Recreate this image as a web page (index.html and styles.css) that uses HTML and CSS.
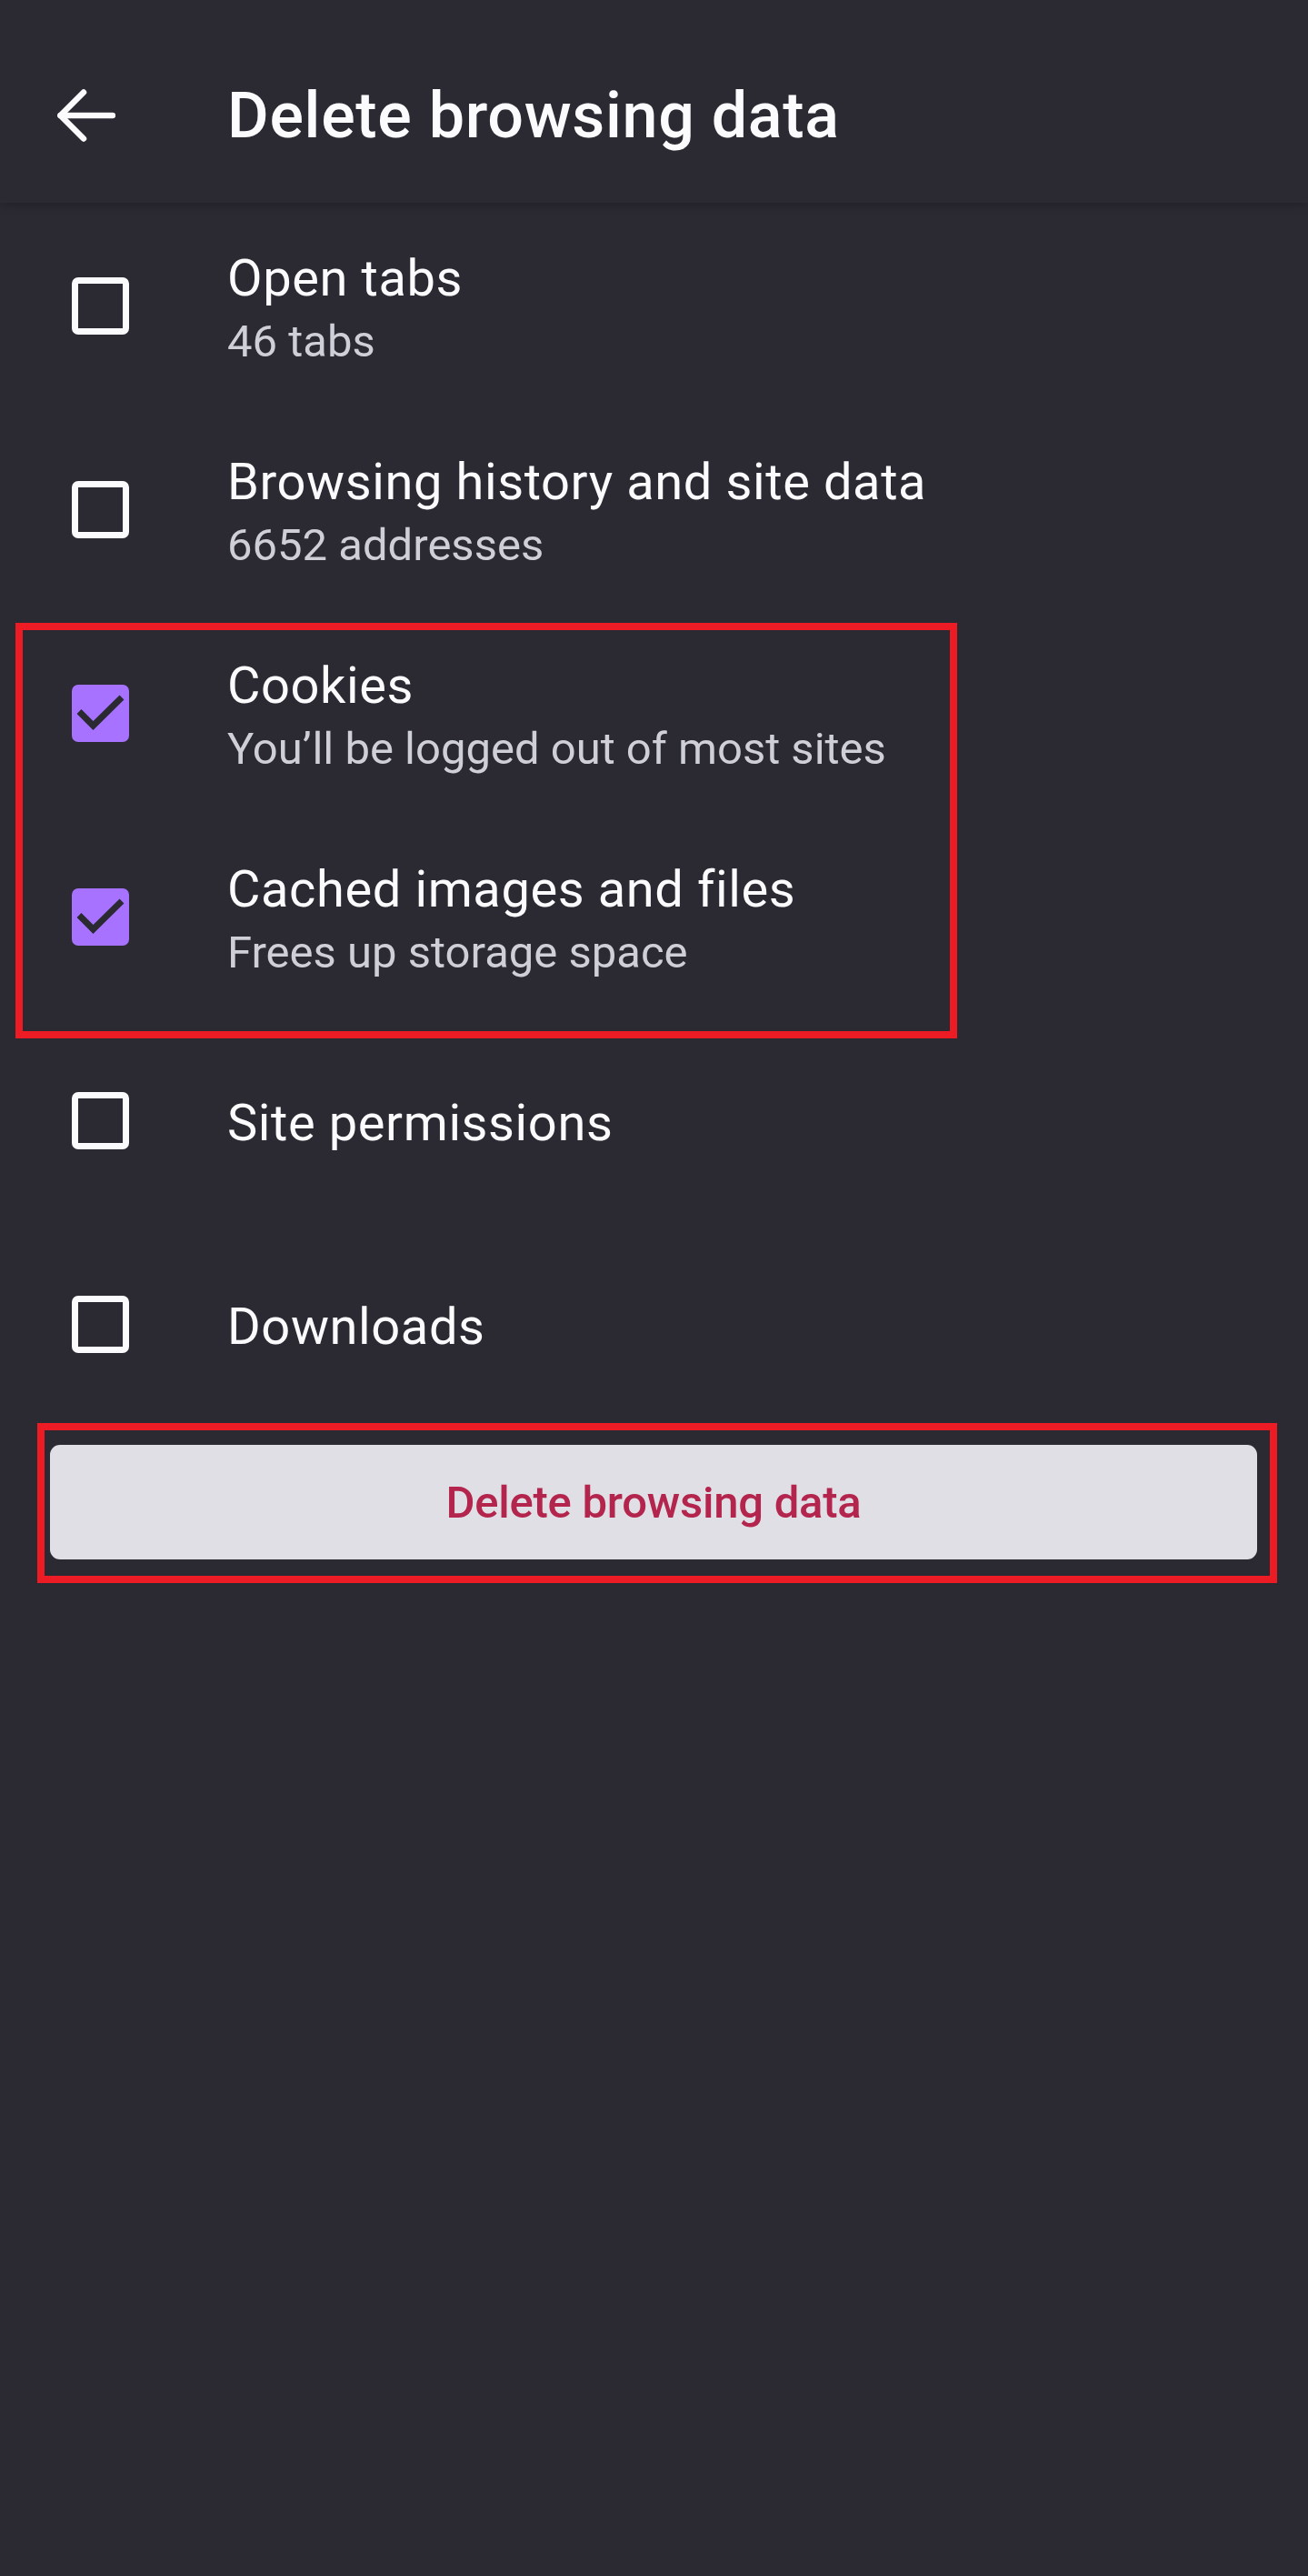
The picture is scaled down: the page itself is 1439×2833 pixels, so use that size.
FILE: index.html
```html
<!DOCTYPE html>
<html lang="en">
<head>
<meta charset="utf-8">
<title>Delete browsing data</title>
<link rel="stylesheet" href="styles.css">
</head>
<body>
<div class="screen">
  <header class="toolbar">
    <div class="toolbar-inner">
      <button class="back" aria-label="Back">
        <svg width="64" height="58" viewBox="0 0 64 58" fill="none" stroke="#FBFBFE" stroke-width="6.5" stroke-linecap="round" stroke-linejoin="round">
          <path d="M3.5 29 H61"/>
          <path d="M29 3.5 L3.5 29 L29 54.5"/>
        </svg>
      </button>
      <h1 class="title">Delete browsing data</h1>
    </div>
  </header>

  <main class="list">
    <div class="row">
      <span class="box"></span>
      <div class="text">
        <div class="label">Open tabs</div>
        <div class="sub">46 tabs</div>
      </div>
    </div>
    <div class="row">
      <span class="box"></span>
      <div class="text">
        <div class="label">Browsing history and site data</div>
        <div class="sub">6652 addresses</div>
      </div>
    </div>
    <div class="row">
      <span class="box checked">
        <svg width="63" height="63" viewBox="0 0 63 63" fill="none" stroke="#2B2A33" stroke-width="7" stroke-linecap="butt" stroke-linejoin="miter">
          <path d="M8 29.5 L23.5 45 L55 14"/>
        </svg>
      </span>
      <div class="text">
        <div class="label">Cookies</div>
        <div class="sub">You’ll be logged out of most sites</div>
      </div>
    </div>
    <div class="row">
      <span class="box checked">
        <svg width="63" height="63" viewBox="0 0 63 63" fill="none" stroke="#2B2A33" stroke-width="7" stroke-linecap="butt" stroke-linejoin="miter">
          <path d="M8 29.5 L23.5 45 L55 14"/>
        </svg>
      </span>
      <div class="text">
        <div class="label">Cached images and files</div>
        <div class="sub">Frees up storage space</div>
      </div>
    </div>
    <div class="row">
      <span class="box"></span>
      <div class="text">
        <div class="label">Site permissions</div>
      </div>
    </div>
    <div class="row">
      <span class="box"></span>
      <div class="text">
        <div class="label">Downloads</div>
      </div>
    </div>

    <div class="action">
      <button class="delete-btn">Delete browsing data</button>
    </div>
  </main>

  <div class="highlight highlight-items"></div>
  <div class="highlight highlight-button"></div>
</div>
</body>
</html>
```

FILE: styles.css
```css
* {
  box-sizing: border-box;
}

html, body {
  margin: 0;
  padding: 0;
  background: #2B2A33;
}

body {
  font-family: Roboto, "Noto Sans", "Liberation Sans", sans-serif;
  color: #FBFBFE;
  min-height: 2833px;
}

.screen {
  position: relative;
  width: 1439px;
  min-height: 2833px;
  background: #2B2A33;
}

.toolbar {
  position: relative;
  z-index: 2;
  height: 223px;
  padding-top: 29px;
  background: #2B2A33;
  box-shadow: 0 3px 10px rgba(0, 0, 0, 0.22);
}

.toolbar-inner {
  height: 196px;
  display: flex;
  align-items: center;
}

.back {
  margin: 0 0 0 63px;
  padding: 0;
  border: 0;
  background: none;
  width: 64px;
  height: 58px;
  display: flex;
  align-items: center;
  justify-content: center;
}

.back svg {
  display: block;
}

.title {
  margin: 0 0 0 123px;
  font-size: 70px;
  font-weight: 500;
  line-height: 82px;
  color: #FBFBFE;
  letter-spacing: 0.7px;
}

.list {
  display: flex;
  flex-direction: column;
  padding-top: 1px;
}

.row {
  height: 224px;
  display: flex;
  align-items: center;
}

.box {
  flex: none;
  width: 63px;
  height: 63px;
  margin-left: 79px;
  border: 7px solid #FBFBFE;
  border-radius: 7px;
  display: flex;
  align-items: center;
  justify-content: center;
}

.box.checked {
  border: 0;
  background: #A672FF;
}

.box svg {
  display: block;
}

.text {
  margin-left: 108px;
  padding-top: 6px;
  display: flex;
  flex-direction: column;
}

.label {
  font-size: 56px;
  line-height: 66px;
  font-weight: 400;
  color: #FBFBFE;
  letter-spacing: 0.6px;
}

.sub {
  margin-top: 8px;
  font-size: 49px;
  line-height: 58px;
  font-weight: 400;
  color: #CFCFD8;
}

.action {
  padding: 21px 56px 0 55px;
}

.delete-btn {
  display: block;
  width: 100%;
  height: 126px;
  border: 0;
  border-radius: 11px;
  background: #E0DFE5;
  color: #B3254C;
  font-family: Roboto, "Noto Sans", "Liberation Sans", sans-serif;
  font-size: 49px;
  font-weight: 500;
  letter-spacing: -0.25px;
  padding: 0;
}

.highlight {
  position: absolute;
  border: 8px solid #ED1C24;
  z-index: 3;
  pointer-events: none;
}

.highlight-items {
  left: 17px;
  top: 685px;
  width: 1036px;
  height: 457px;
}

.highlight-button {
  left: 41px;
  top: 1565px;
  width: 1364px;
  height: 176px;
}
```
